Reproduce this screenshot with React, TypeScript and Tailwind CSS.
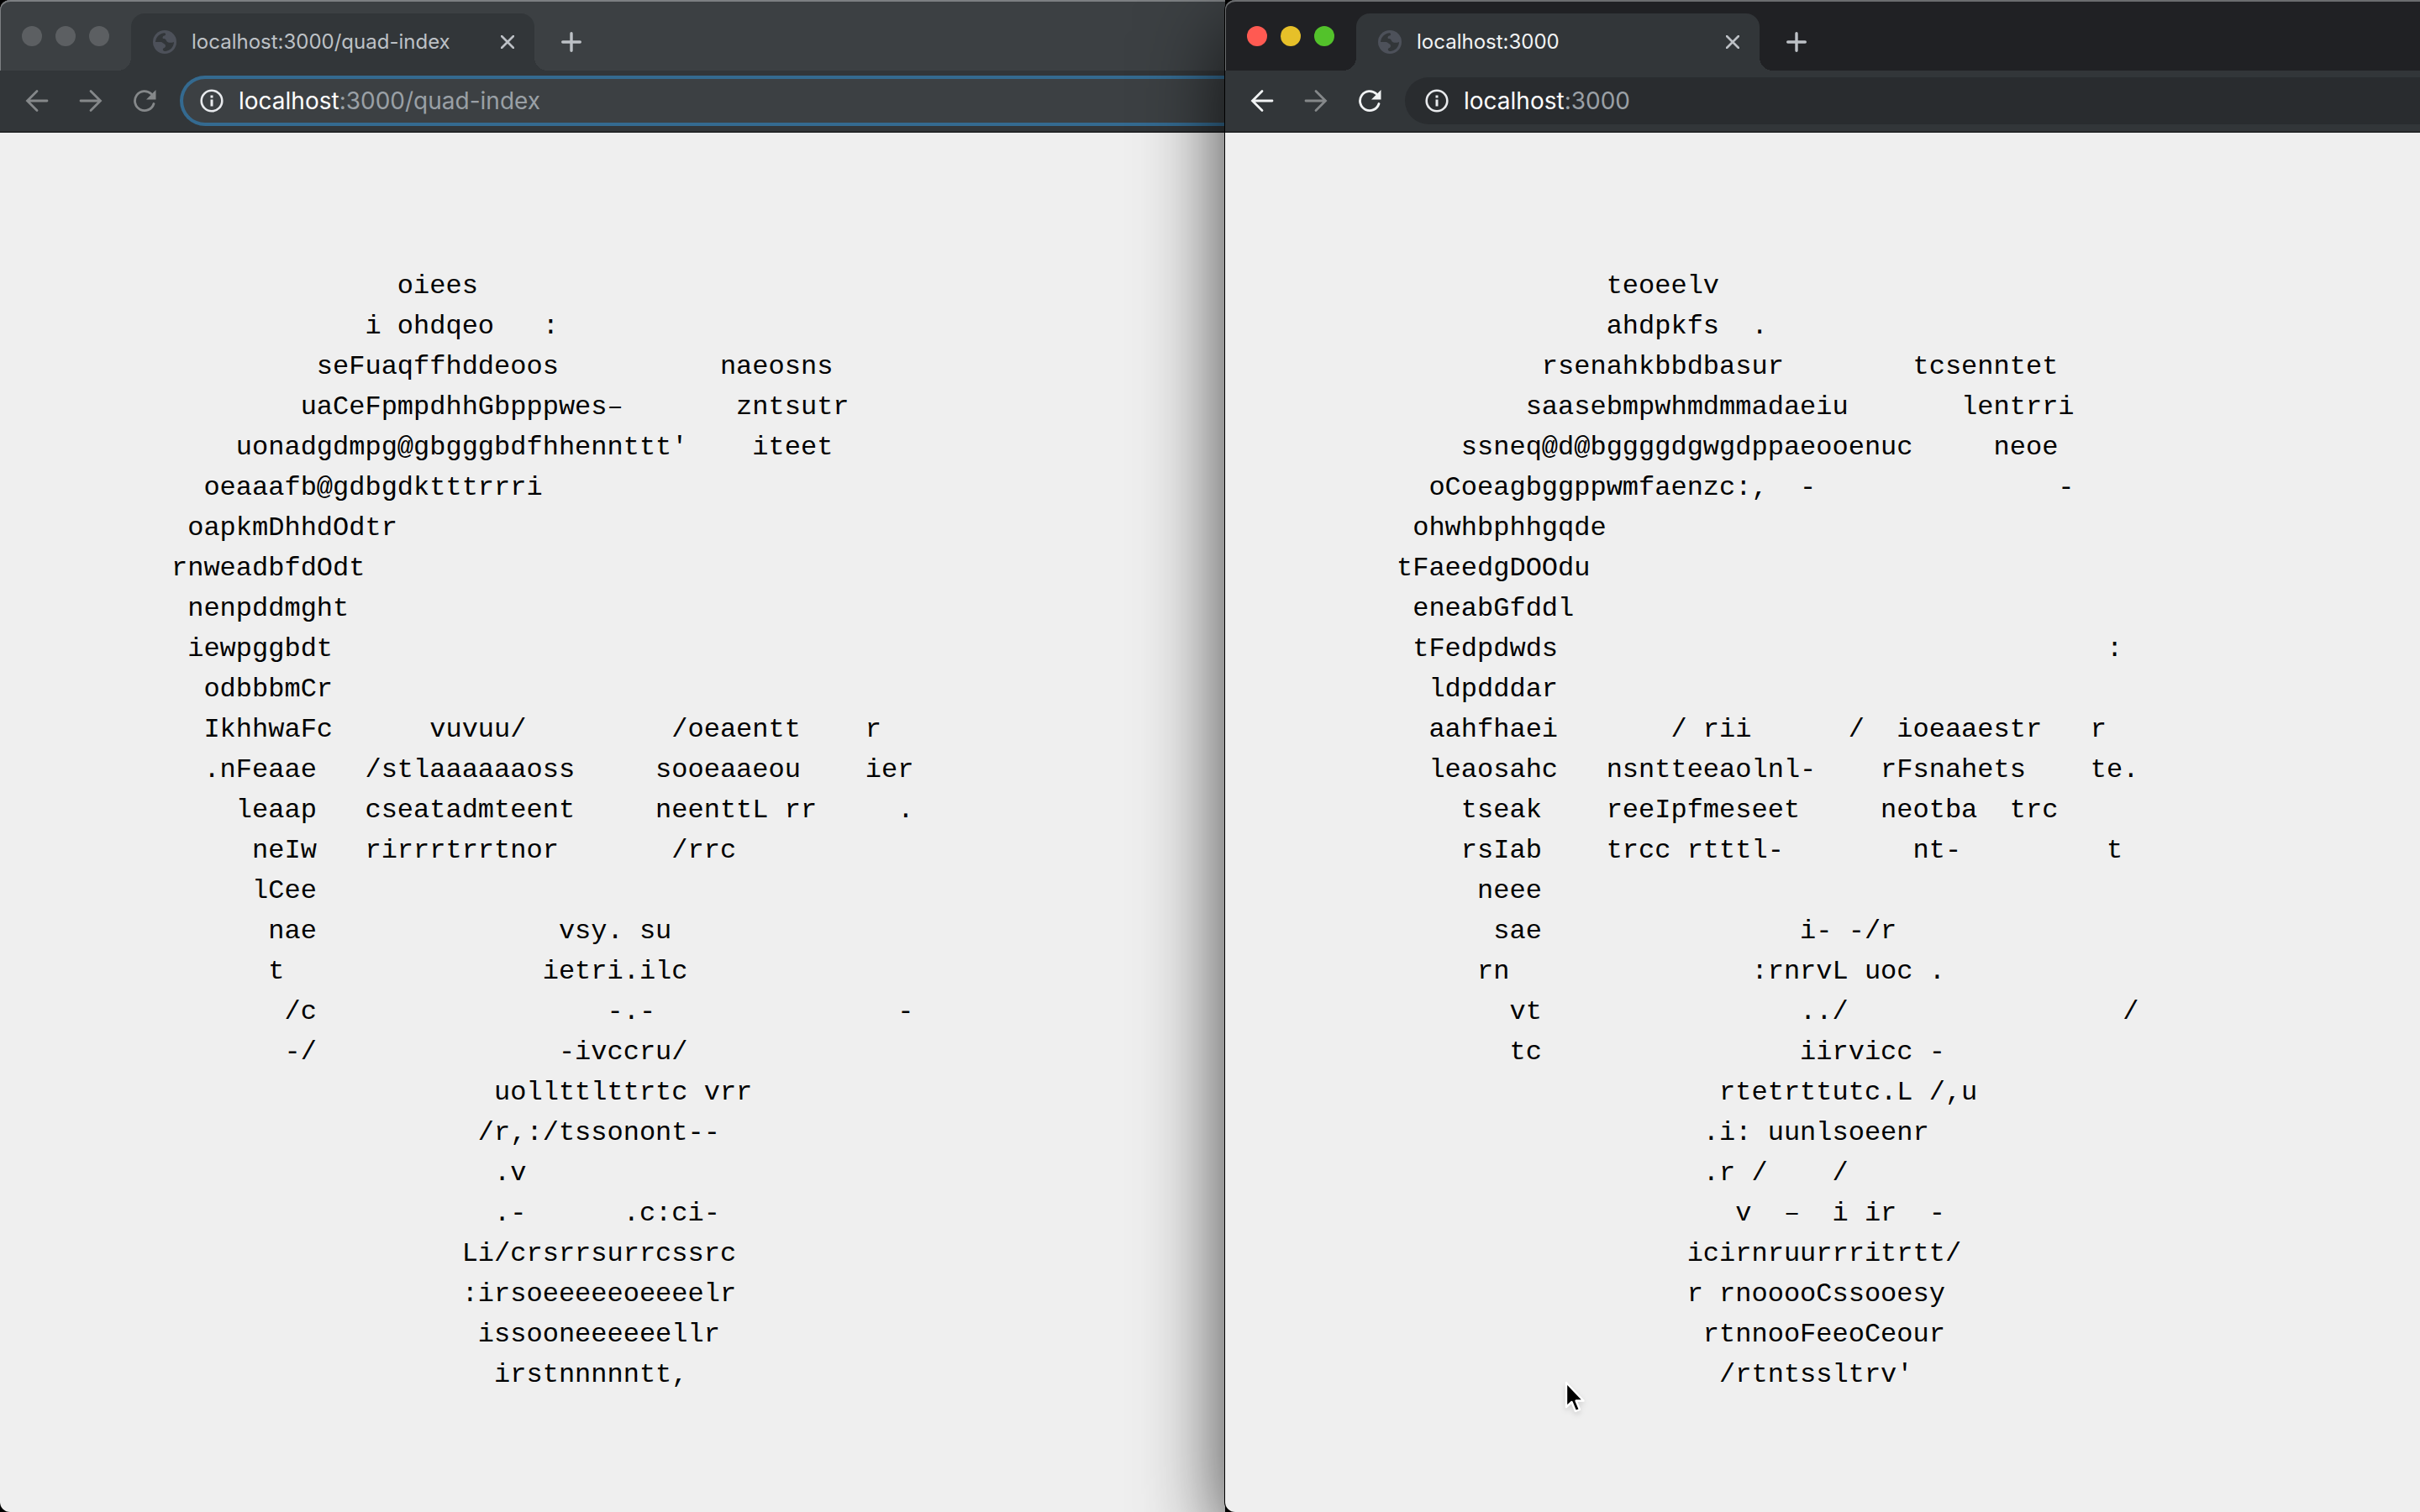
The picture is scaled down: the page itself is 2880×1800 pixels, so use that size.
const LEFT_ART = [
  "              oiees",
  "            i ohdqeo   :",
  "         seFuaqffhddeoos          naeosns",
  "        uaCeFpmpdhhGbpppwes–       zntsutr",
  "    uonadgdmpg@gbgggbdfhhennttt'    iteet",
  "  oeaaafb@gdbgdktttrrri",
  " oapkmDhhdOdtr",
  "rnweadbfdOdt",
  " nenpddmght",
  " iewpggbdt",
  "  odbbbmCr",
  "  IkhhwaFc      vuvuu/         /oeaentt    r",
  "  .nFeaae   /stlaaaaaaoss     sooeaaeou    ier",
  "    leaap   cseatadmteent     neenttL rr     .",
  "     neIw   rirrrtrrtnor       /rrc",
  "     lCee",
  "      nae               vsy. su",
  "      t                ietri.ilc",
  "       /c                  -.-               -",
  "       -/               -ivccru/",
  "                    uollttlttrtc vrr",
  "                   /r,:/tssonont--",
  "                    .v",
  "                    .-      .c:ci-",
  "                  Li/crsrrsurrcssrc",
  "                  :irsoeeeeeoeeeelr",
  "                   issooneeeeeellr",
  "                    irstnnnnntt,",
];

const RIGHT_ART = [
  "             teoeelv",
  "             ahdpkfs  .",
  "         rsenahkbbdbasur        tcsenntet",
  "        saasebmpwhmdmmadaeiu       lentrri",
  "    ssneq@d@bggggdgwgdppaeooenuc     neoe",
  "  oCoeagbggppwmfaenzc:,  -               -",
  " ohwhbphhgqde",
  "tFaeedgDOOdu",
  " eneabGfddl",
  " tFedpdwds                                  :",
  "  ldpdddar",
  "  aahfhaei       / rii      /  ioeaaestr   r",
  "  leaosahc   nsntteeaolnl-    rFsnahets    te.",
  "    tseak    reeIpfmeseet     neotba  trc",
  "    rsIab    trcc rtttl-        nt-         t",
  "     neee",
  "      sae                i- -/r",
  "     rn               :rnrvL uoc .",
  "       vt                ../                 /",
  "       tc                iirvicc -",
  "                    rtetrttutc.L /,u",
  "                   .i: uunlsoeenr",
  "                   .r /    /",
  "                     v  –  i ir  -",
  "                  icirnruurrritrtt/",
  "                  r rnooooCssooesy",
  "                   rtnnooFeeoCeour",
  "                    /rtntssltrv'",
];

function GlobeIcon() {
  return (
    <svg viewBox="0 0 28 28" className="size-7 shrink-0" aria-hidden="true">
      <circle cx="14" cy="14" r="14" fill="#4d515a" />
      <path
        d="M3 14C3.500 8 8 3.500 14 3.200C15.800 4 15.500 6 13.500 6.500C11.500 7 11 8.500 12 10C14 10 15.500 10.500 16 12.500C17 15 21 15.500 25 14C25 19.500 20.500 24.500 15 25C12 25 11 23 12.500 21.500C15 21 15.500 18.500 14.500 17C12.500 16 11.500 14 9 14Z"
        fill="#323639"
      />
    </svg>
  );
}

function ArrowIcon({ forward = false }: { forward?: boolean }) {
  return (
    <svg
      viewBox="0 0 28 28"
      className={forward ? "size-7 rotate-180" : "size-7"}
      fill="none"
      stroke="currentColor"
      strokeWidth="2.800"
      strokeLinecap="round"
      aria-hidden="true"
    >
      <path d="M26 14H3M14 2.500L2.500 14L14 25.500" />
    </svg>
  );
}

function ReloadIcon() {
  return (
    <svg viewBox="0 0 28 28" className="size-7" aria-hidden="true">
      <path
        d="M25 17.500A11.500 11.500 0 1 1 22 5.800"
        fill="none"
        stroke="currentColor"
        strokeWidth="2.800"
        strokeLinecap="round"
      />
      <path d="M27.500 1V12.500H16z" fill="currentColor" />
    </svg>
  );
}

function InfoIcon() {
  return (
    <svg viewBox="0 0 28 28" className="size-7 shrink-0 text-[#e8eaed]" aria-hidden="true">
      <circle cx="14" cy="14" r="12.300" fill="none" stroke="currentColor" strokeWidth="2.600" />
      <path d="M12.500 12.500h3v8h-3zM12.500 7.500h3v3h-3z" fill="currentColor" />
    </svg>
  );
}

type WindowProps = {
  host: string;
  rest: string;
  art: string[];
  active?: boolean;
};

function BrowserWindow({ host, rest, art, active = false }: WindowProps) {
  const lights = active
    ? ["bg-[#ff5a52]", "bg-[#e6c029]", "bg-[#53c22b]"]
    : ["bg-[#5c5f62]", "bg-[#5c5f62]", "bg-[#5c5f62]"];
  const names = ["Close window", "Minimise window", "Zoom window"];
  return (
    <section
      aria-label={host + rest}
      className={
        active
          ? "relative z-10 flex min-w-0 flex-col rounded-l-xl bg-[#efefef] shadow-[0_0_0_1px_#000,0_36px_100px_rgba(0,0,0,0.75)]"
          : "flex min-w-0 flex-col overflow-hidden rounded-l-xl bg-[#efefef]"
      }
    >
      <header className="overflow-hidden rounded-tl-xl border-b-2 border-[#232527] bg-[#323639] font-[Inter,sans-serif]">
        <div
          className={
            active
              ? "flex h-[84px] items-end rounded-tl-xl border-t-2 border-l border-[#6b6d6f] bg-[#202124]"
              : "flex h-[84px] items-end rounded-tl-xl border-t-2 border-l border-[#7c7f82] bg-[#3c4043]"
          }
        >
          <div className="flex h-[82px] w-[155px] shrink-0 items-center gap-4 pl-[25px]">
            {lights.map((color, i) => (
              <button key={names[i]} aria-label={names[i]} className={`size-6 rounded-full ${color}`} />
            ))}
          </div>
          <div className="relative flex h-[68px] w-[480px] shrink-0 items-center rounded-t-2xl bg-[#323639] pr-6 pl-[26px] before:absolute before:bottom-0 before:-left-4 before:size-4 before:bg-[radial-gradient(circle_at_0_0,transparent_16px,#323639_16px)] after:absolute after:-right-4 after:bottom-0 after:size-4 after:bg-[radial-gradient(circle_at_100%_0,transparent_16px,#323639_16px)]">
            <GlobeIcon />
            <span
              className={
                active
                  ? "ml-[18px] flex-1 text-2xl whitespace-nowrap text-[#f1f3f4]"
                  : "ml-[18px] flex-1 text-2xl whitespace-nowrap text-[#bdc1c6]"
              }
            >
              {host}
              {rest}
            </span>
            <button aria-label="Close tab" className="text-[#bdc1c6]">
              <svg viewBox="0 0 16 16" className="size-4" stroke="currentColor" strokeWidth="2.600" strokeLinecap="round">
                <path d="M1 1L15 15M15 1L1 15" />
              </svg>
            </button>
          </div>
          <button aria-label="New tab" className="mb-[22px] ml-8 text-[#bdc1c6]">
            <svg viewBox="0 0 24 24" className="size-6" stroke="currentColor" strokeWidth="3.400" strokeLinecap="round">
              <path d="M12 1.700V22.300M1.700 12H22.300" />
            </svg>
          </button>
        </div>
        <div className="flex h-[72px] items-center gap-9 pl-[30px]">
          <button aria-label="Back" className={active ? "text-[#f1f3f4]" : "text-[#85888a]"}>
            <ArrowIcon />
          </button>
          <button aria-label="Forward" className="text-[#85888a]">
            <ArrowIcon forward />
          </button>
          <button aria-label="Reload" className={active ? "text-[#f1f3f4]" : "text-[#85888a]"}>
            <ReloadIcon />
          </button>
          <div
            className={
              active
                ? "-ml-2 flex h-14 flex-1 items-center rounded-l-full bg-[#292c2f] pl-6 text-[28px] leading-none whitespace-nowrap"
                : "-ml-2 flex h-[60px] flex-1 items-center rounded-l-full border-4 border-r-0 border-[#346a90] bg-[#3c4043] pl-5 text-[28px] leading-none whitespace-nowrap"
            }
          >
            <InfoIcon />
            <a href={"http://" + host + rest} className="ml-[18px] text-[#9aa0a6]">
              <span className="text-white">{host.split(":")[0]}</span>:{host.split(":")[1]}
              {rest}
            </a>
          </div>
        </div>
      </header>
      <main className="flex-1 overflow-hidden">
        <pre className="pt-[159px] pl-[204px] font-['Liberation_Mono',monospace] text-[32px] leading-[48px] text-black">
          {art.join("\n")}
        </pre>
      </main>
    </section>
  );
}

export default function App() {
  return (
    <div className="relative grid h-screen grid-cols-[1458fr_1422fr] overflow-hidden bg-black">
      <BrowserWindow host="localhost:3000" rest="/quad-index" art={LEFT_ART} />
      <BrowserWindow host="localhost:3000" rest="" art={RIGHT_ART} active />
      <svg
        viewBox="0 0 24 40"
        className="absolute top-[1644px] left-[1862px] z-20 h-10 w-6 drop-shadow-md"
        aria-hidden="true"
      >
        <path
          d="M2 2V31L8.500 25L13 36L18 34L13.500 23.500H22.500z"
          fill="#000"
          stroke="#fff"
          strokeWidth="2.400"
          strokeLinejoin="round"
        />
      </svg>
    </div>
  );
}
